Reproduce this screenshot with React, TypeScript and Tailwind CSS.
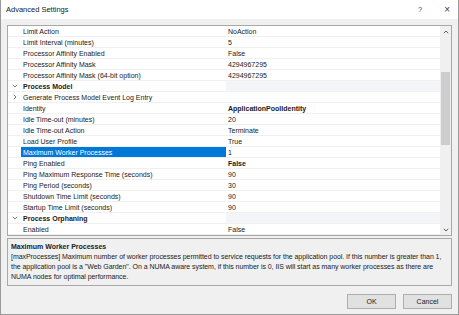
import React from "react";

type Row = {
  name: string;
  value?: string;
  kind?: "category" | "collapsed";
  bold?: boolean;
  selected?: boolean;
};

const rows: Row[] = [
  { name: "Limit Action", value: "NoAction" },
  { name: "Limit Interval (minutes)", value: "5" },
  { name: "Processor Affinity Enabled", value: "False" },
  { name: "Processor Affinity Mask", value: "4294967295" },
  { name: "Processor Affinity Mask (64-bit option)", value: "4294967295" },
  { name: "Process Model", kind: "category" },
  { name: "Generate Process Model Event Log Entry", kind: "collapsed" },
  { name: "Identity", value: "ApplicationPoolIdentity", bold: true },
  { name: "Idle Time-out (minutes)", value: "20" },
  { name: "Idle Time-out Action", value: "Terminate" },
  { name: "Load User Profile", value: "True" },
  { name: "Maximum Worker Processes", value: "1", selected: true },
  { name: "Ping Enabled", value: "False", bold: true },
  { name: "Ping Maximum Response Time (seconds)", value: "90" },
  { name: "Ping Period (seconds)", value: "30" },
  { name: "Shutdown Time Limit (seconds)", value: "90" },
  { name: "Startup Time Limit (seconds)", value: "90" },
  { name: "Process Orphaning", kind: "category" },
  { name: "Enabled", value: "False" },
];

const Chevron = ({ open }: { open: boolean }) => (
  <svg width="6" height="6" viewBox="0 0 6 6" className="text-[#6b6b6b]">
    {open ? (
      <path d="M0.8 1.8 L3 4 L5.2 1.8" fill="none" stroke="currentColor" strokeWidth="0.9" />
    ) : (
      <path d="M1.8 0.8 L4 3 L1.8 5.2" fill="none" stroke="currentColor" strokeWidth="0.9" />
    )}
  </svg>
);

const PropertyRow = ({ row }: { row: Row }) => {
  const isCategory = row.kind === "category";
  return (
    <div className="flex h-[11px] border-b border-[#f0f0f0]">
      <div className="w-[13px] shrink-0 flex items-center justify-center">
        {isCategory && <Chevron open />}
        {row.kind === "collapsed" && <Chevron open={false} />}
      </div>
      <div
        className={
          "w-[205px] shrink-0 flex items-center pl-[2px] whitespace-nowrap " +
          (row.selected ? "bg-[#0078d7] text-white" : "") +
          (isCategory ? " font-bold" : "")
        }
      >
        {row.name}
      </div>
      <div
        className={
          "flex-1 flex items-center pl-[2px] " +
          (isCategory ? "bg-[#f3f5f8]" : "") +
          (row.bold ? " font-bold" : "")
        }
      >
        {row.value}
      </div>
    </div>
  );
};

const Scrollbar = () => (
  <div className="w-[11px] shrink-0 bg-[#f0f0f0] flex flex-col items-center">
    <div className="h-[11px] flex items-center justify-center">
      <svg width="6" height="4" viewBox="0 0 6 4">
        <path d="M0.8 3.2 L3 1 L5.2 3.2" fill="none" stroke="#606060" strokeWidth="1" />
      </svg>
    </div>
    <div className="mt-[35px] w-[9px] h-[73px] bg-[#cdcdcd]" />
    <div className="flex-1" />
    <div className="h-[11px] flex items-center justify-center">
      <svg width="6" height="4" viewBox="0 0 6 4">
        <path d="M0.8 0.8 L3 3 L5.2 0.8" fill="none" stroke="#606060" strokeWidth="1" />
      </svg>
    </div>
  </div>
);

export default function App() {
  return (
    <div
      className="w-[459px] h-[315px] bg-[#f0f0f0] border-x border-b border-[#9a9a9a] flex flex-col text-[7px] text-[#1a1a1a] leading-none"
      style={{ fontFamily: '"Liberation Sans", Arial, sans-serif' }}
    >
      <div className="h-[19px] bg-white flex items-center pl-[5px] shrink-0">
        <span className="text-[7.5px] text-[#202020]">Advanced Settings</span>
        <span className="ml-auto text-[7.5px] text-[#404040]">?</span>
        <span className="ml-[22px] mr-[8px] text-[10px] font-light text-[#404040]">×</span>
      </div>

      <div className="flex flex-col px-[6px] pt-[6px]">
        <div className="h-[211px] border border-[#a8a8a8] bg-white flex overflow-hidden">
          <div className="flex-1 flex flex-col">
            {rows.map((row, i) => (
              <PropertyRow key={i} row={row} />
            ))}
          </div>
          <Scrollbar />
        </div>

        <div className="mt-[2px] h-[48px] border border-[#a8a8a8] px-[3px] pt-[4px] text-[#1a1a1a]">
          <div className="font-bold mb-[2px]">Maximum Worker Processes</div>
          <p className="leading-[10px] tracking-[-0.05px]">
            [maxProcesses] Maximum number of worker processes permitted to service requests for the application pool. If this number is greater than 1, the application pool is a "Web Garden". On a NUMA aware system, if this number is 0, IIS will start as many worker processes as there are NUMA nodes for optimal performance.
          </p>
        </div>

        <div className="flex justify-end gap-[7px] mt-[8px]">
          <button className="w-[49px] h-[15px] bg-[#e1e1e1] border border-[#adadad] text-[7px] text-[#1a1a1a]">
            OK
          </button>
          <button className="w-[49px] h-[15px] bg-[#e1e1e1] border border-[#adadad] text-[7px] text-[#1a1a1a]">
            Cancel
          </button>
        </div>
      </div>
    </div>
  );
}
